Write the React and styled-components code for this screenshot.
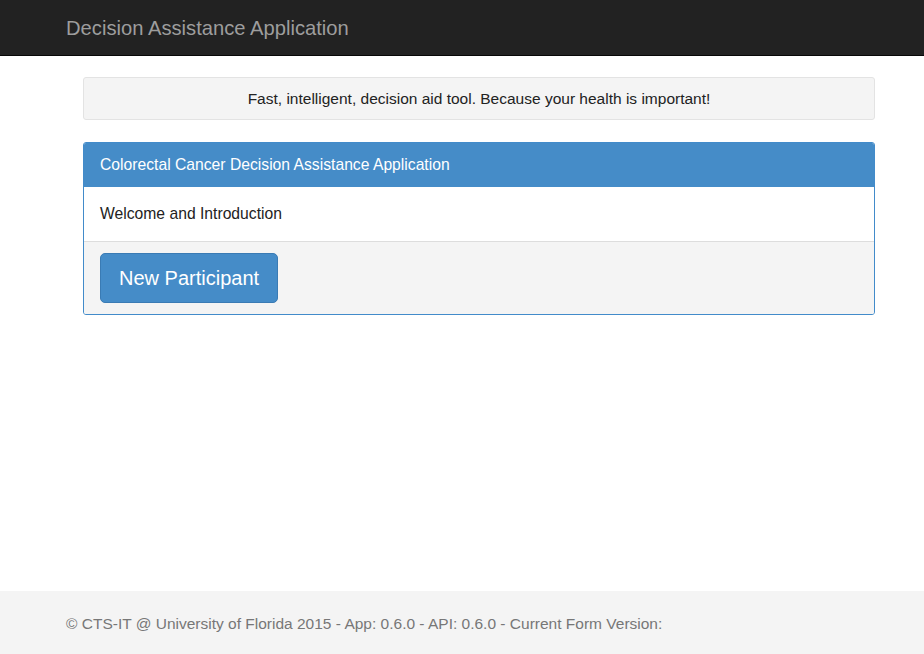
import React from "react";
import styled, { createGlobalStyle } from "styled-components";

const Global = createGlobalStyle`
  html, body { margin: 0; padding: 0; height: 100%; }
  body { font-family: "Liberation Sans", Arial, sans-serif; background: #fff; color: #333; }
  #root { min-height: 100%; }
`;

const Page = styled.div`
  display: flex;
  flex-direction: column;
  height: 654px;
`;

const Navbar = styled.header`
  height: 56px;
  background: #222;
  border-bottom: 1px solid #080808;
  display: flex;
  align-items: center;
  padding: 1px 0 0 66px;
  box-sizing: border-box;
  flex-shrink: 0;
`;

const Brand = styled.span`
  font-size: 20.2px;
  color: #9d9d9d;
`;

const Main = styled.main`
  flex: 1;
  padding: 21px 49px 0 83px;
  display: flex;
  flex-direction: column;
  gap: 22px;
`;

const Well = styled.div`
  height: 41px;
  background: #f4f4f4;
  border: 1px solid #e3e3e3;
  border-radius: 3px;
  display: flex;
  align-items: center;
  justify-content: center;
  font-size: 15.5px;
  color: #222;
`;

const Panel = styled.section`
  border: 1px solid #428bca;
  border-radius: 3px;
  overflow: hidden;
`;

const PanelHeading = styled.div`
  height: 44px;
  background: #458cc8;
  color: #fff;
  font-size: 15.7px;
  display: flex;
  align-items: center;
  padding-left: 16px;
`;

const PanelBody = styled.div`
  height: 54px;
  display: flex;
  align-items: center;
  padding-left: 16px;
  font-size: 15.7px;
  color: #222;
  border-bottom: 1px solid #ddd;
`;

const PanelFooter = styled.div`
  background: #f4f4f4;
  padding: 11px 16px 11px;
`;

const Button = styled.button`
  display: block;
  height: 50px;
  padding: 0 18px;
  background: #458cc8;
  border: 1px solid #3a7bb4;
  border-radius: 5px;
  color: #fff;
  font-family: "Liberation Sans", Arial, sans-serif;
  font-size: 20px;
  cursor: pointer;
`;

const Footer = styled.footer`
  height: 63px;
  background: #f4f4f4;
  display: flex;
  align-items: center;
  padding: 2px 0 0 66px;
  box-sizing: border-box;
  font-size: 15.5px;
  color: #777;
  flex-shrink: 0;
`;

export default function App() {
  return (
    <>
      <Global />
      <Page>
        <Navbar>
          <Brand>Decision Assistance Application</Brand>
        </Navbar>
        <Main>
          <Well>Fast, intelligent, decision aid tool. Because your health is important!</Well>
          <Panel>
            <PanelHeading>Colorectal Cancer Decision Assistance Application</PanelHeading>
            <PanelBody>Welcome and Introduction</PanelBody>
            <PanelFooter>
              <Button>New Participant</Button>
            </PanelFooter>
          </Panel>
        </Main>
        <Footer>© CTS-IT @ University of Florida 2015 - App: 0.6.0 - API: 0.6.0 - Current Form Version:</Footer>
      </Page>
    </>
  );
}
